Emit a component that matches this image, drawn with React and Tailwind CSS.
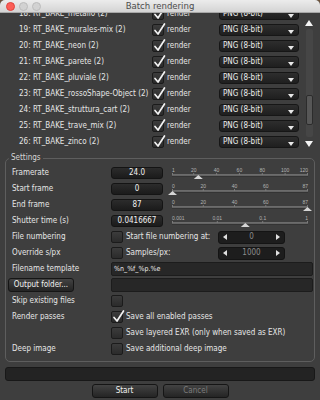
import React from 'react';

const font = "[font-family:'DejaVu_Sans_Condensed','Liberation_Sans',sans-serif]";

const passes = [
  'RT_BAKE_metallo',
  'RT_BAKE_murales-mix',
  'RT_BAKE_neon',
  'RT_BAKE_parete',
  'RT_BAKE_pluviale',
  'RT_BAKE_rossoShape-Object',
  'RT_BAKE_struttura_cart',
  'RT_BAKE_trave_mix',
  'RT_BAKE_zinco',
];

function Check({ checked }) {
  return (
    <div className="relative h-[12px] w-[12px] shrink-0 rounded-[2px] border border-[#1b1b1b] bg-gradient-to-b from-[#3c3c3c] to-[#2b2b2b]">
      {checked ? (
        <svg className="absolute -top-[2px] left-0 overflow-visible" width="13" height="13" viewBox="0 0 13 13">
          <path d="M2 7.5 L5 11 L11.5 1" fill="none" stroke="#f2f2f2" strokeWidth="1.7" strokeLinecap="round" strokeLinejoin="round" />
        </svg>
      ) : null}
    </div>
  );
}

function Dropdown() {
  return (
    <div className="flex h-[12px] w-[80px] items-center justify-between rounded-[3px] border border-[#161616] bg-gradient-to-b from-[#2e2e2e] to-[#1f1f1f] pl-[3px] pr-[4px]">
      <span className="text-[#ececec]">PNG (8-bit)</span>
      <svg width="6" height="4" viewBox="0 0 6 4" className="mt-[3px]">
        <path d="M0 0 H6 L3 4 Z" fill="#e8e8e8" />
      </svg>
    </div>
  );
}

function Slider({ labels, thumb }) {
  return (
    <svg width="136" height="16" viewBox="0 0 136 16" className="ml-[9px] overflow-visible">
      {labels.map(([text, x], i) => (
        <g key={text}>
          <text
            x={x}
            y="6.5"
            fontSize="5"
            fill="#b4b4b4"
            fontFamily="Liberation Sans, sans-serif"
            textAnchor={i === 0 ? 'start' : i === labels.length - 1 ? 'end' : 'middle'}
          >
            {text}
          </text>
          <line x1={Math.min(Math.max(x, 0.5), 135.5)} y1="8" x2={Math.min(Math.max(x, 0.5), 135.5)} y2="9.5" stroke="#8a8a8a" strokeWidth="0.8" />
        </g>
      ))}
      <rect x="0" y="9.5" width="136" height="1.2" fill="#9a9a9a" />
      <rect x="0" y="10.7" width="136" height="0.8" fill="#2a2a2a" />
      <path d={`M${thumb - 4.5} 14 L${thumb} 10 L${thumb + 4.5} 14 Z`} fill="#d6d6d6" />
    </svg>
  );
}

function NumField({ value }) {
  return (
    <div className="flex h-[12px] w-[52px] items-center justify-center rounded-[3px] border border-[#141414] bg-gradient-to-b from-[#2c2c2c] to-[#1b1b1b] text-[#f0f0f0]">
      {value}
    </div>
  );
}

function Spinner({ value }) {
  return (
    <div className="flex h-[13px] w-[67px] items-center justify-between rounded-[3px] border border-[#141414] bg-[#1d1d1d] px-[4px]">
      <svg width="4" height="6" viewBox="0 0 4 6">
        <path d="M4 0 V6 L0 3 Z" fill="#e0e0e0" />
      </svg>
      <span className="text-[#8c8c8c]">{value}</span>
      <svg width="4" height="6" viewBox="0 0 4 6">
        <path d="M0 0 V6 L4 3 Z" fill="#e0e0e0" />
      </svg>
    </div>
  );
}

function Row({ label, children }) {
  return (
    <div className="flex h-[16px] items-center">
      <div className="w-[105px] shrink-0 pl-[6px]">{label}</div>
      {children}
    </div>
  );
}

function Button({ children, disabled, className = '' }) {
  return (
    <div
      className={`flex h-[14px] items-center justify-center rounded-[3px] border border-[#151515] bg-gradient-to-b from-[#434343] to-[#242424] ${
        disabled ? 'text-[#7c7c7c]' : 'text-[#f2f2f2]'
      } ${className}`}
    >
      {children}
    </div>
  );
}

export default function App() {
  return (
    <div className={`h-[400px] w-[320px] overflow-hidden bg-[#6e533c] text-[8px] leading-none text-[#e6e6e6] ${font}`}>
      <div className="flex h-full flex-col rounded-t-[5px] bg-[#3e3e3e]">
        <div className="grid h-[13px] shrink-0 grid-cols-[1fr_auto_1fr] items-center rounded-t-[5px] border-b border-[#a8a8a8] bg-gradient-to-b from-[#ececec] to-[#d4d4d4]">
          <div className="flex gap-[4px] pl-[6px]">
            <div className="h-[9px] w-[9px] rounded-full border border-[#e0443e] bg-[#fc5f57]" />
            <div className="h-[9px] w-[9px] rounded-full border border-[#bcbcbc] bg-[#d2d2d2]" />
            <div className="h-[9px] w-[9px] rounded-full border border-[#bcbcbc] bg-[#d2d2d2]" />
          </div>
          <div className="text-[9.5px] text-[#4c4c4c]">Batch rendering</div>
          <div />
        </div>

        <div className="flex h-[139px] shrink-0 overflow-hidden">
          <div className="-mt-[7px] flex-1">
            {passes.map((name, i) => (
              <div key={name} className="flex h-[16px] items-center pl-[19px]">
                <div className="w-[133px] shrink-0 whitespace-nowrap">
                  {i + 18}: {name} (2)
                </div>
                <Check checked />
                <div className="ml-[3px] w-[52px]">render</div>
                <Dropdown />
              </div>
            ))}
          </div>
          <div className="mr-[5px] flex w-[12px] flex-col items-center pt-[7px]">
            <svg width="8" height="6" viewBox="0 0 8 6">
              <path d="M0 6 L4 0 L8 6 Z" fill="#f4f4f4" />
            </svg>
            <div className="mt-[3px] flex w-[7px] flex-1 flex-col rounded-[2px] bg-[#464646]">
              <div className="flex-1" />
              <div className="mb-[12px] h-[30px] rounded-[2px] border border-[#2c2c2c] bg-[#575757]" />
            </div>
            <svg width="8" height="6" viewBox="0 0 8 6" className="mt-[4px] mb-[5px]">
              <path d="M0 0 L8 0 L4 6 Z" fill="#f4f4f4" />
            </svg>
          </div>
        </div>

        <fieldset className="mx-[5px] mt-[1px] shrink-0 rounded-[5px] border border-[#5e5e5e] pt-[2px] pb-[4px]">
          <legend className="ml-[3px] px-[2px] leading-[10px] text-[#d6d6d6]">Settings</legend>

          <Row label="Framerate">
            <NumField value="24.0" />
            <Slider
              thumb={26.3}
              labels={[['1', 0], ['20', 21.7], ['40', 44.6], ['60', 67.4], ['80', 90.3], ['100', 113.1], ['120', 136]]}
            />
          </Row>
          <Row label="Start frame">
            <NumField value="0" />
            <Slider thumb={0.5} labels={[['0', 0], ['20', 31.3], ['40', 62.5], ['60', 93.8], ['87', 136]]} />
          </Row>
          <Row label="End frame">
            <NumField value="87" />
            <Slider thumb={135.5} labels={[['0', 0], ['20', 31.3], ['40', 62.5], ['60', 93.8], ['87', 136]]} />
          </Row>
          <Row label="Shutter time (s)">
            <NumField value="0.0416667" />
            <Slider thumb={73.3} labels={[['0.001', 0], ['0.01', 45.3], ['0.1', 90.7], ['1', 136]]} />
          </Row>
          <Row label="File numbering">
            <Check />
            <span className="ml-[3px] w-[92px]">Start file numbering at:</span>
            <Spinner value="0" />
          </Row>
          <Row label="Override s/px">
            <Check />
            <span className="ml-[3px] w-[92px]">Samples/px:</span>
            <Spinner value="1000" />
          </Row>
          <Row label="Filename template">
            <div className="flex h-[14px] w-[202px] items-center rounded-[2px] border border-[#1c1c1c] bg-[#272727] pl-[2px] text-[7px] text-[#eeeeee]">
              %n_%f_%p.%e
            </div>
          </Row>
          <div className="flex h-[16px] items-center">
            <div className="w-[105px] shrink-0 pl-[2px]">
              <Button className="w-[66px]">Output folder...</Button>
            </div>
            <div className="h-[14px] w-[202px] rounded-[2px] border border-[#1c1c1c] bg-[#272727]" />
          </div>
          <Row label="Skip existing files">
            <Check />
          </Row>
          <Row label="Render passes">
            <Check checked />
            <span className="ml-[3px]">Save all enabled passes</span>
          </Row>
          <Row label="">
            <Check />
            <span className="ml-[3px]">Save layered EXR (only when saved as EXR)</span>
          </Row>
          <Row label="Deep image">
            <Check />
            <span className="ml-[3px]">Save additional deep image</span>
          </Row>
        </fieldset>

        <div className="mx-[5px] mt-[5px] h-[14px] shrink-0 rounded-[3px] border border-[#181818] bg-[#232323]" />

        <div className="mt-[3px] flex justify-center gap-[5px]">
          <Button className="w-[66px]">Start</Button>
          <Button className="w-[66px]" disabled>
            Cancel
          </Button>
        </div>
      </div>
    </div>
  );
}
